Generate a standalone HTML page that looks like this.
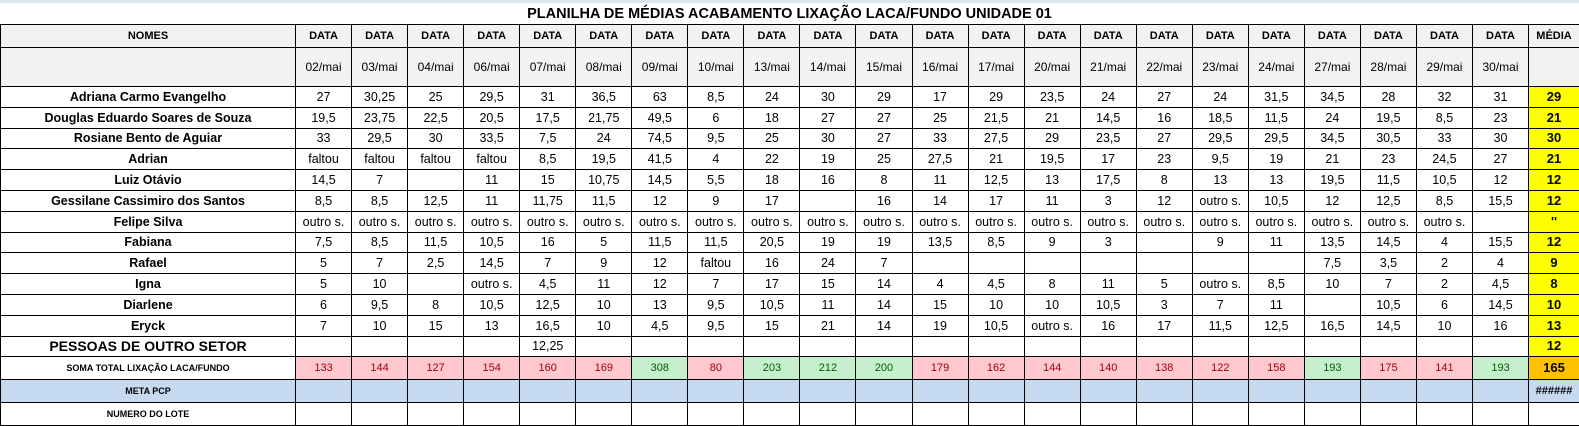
<!DOCTYPE html>
<html><head><meta charset="utf-8"><style>
body{margin:0;width:1579px;height:424px;overflow:hidden;background:#fff;font-family:"Liberation Sans",Arial,sans-serif;}
.top{height:3px;background:#dce6f1;}
.title{position:absolute;left:0;top:3px;width:1579px;height:21px;text-align:center;font-weight:bold;font-size:14.5px;line-height:22px;}
table{position:absolute;left:0;top:24px;border-collapse:collapse;table-layout:fixed;width:1579px;}
tr{height:20.8px;}
td{border:1px solid #000;padding:0;text-align:center;font-size:12.5px;line-height:16px;white-space:nowrap;overflow:hidden;}
tr.h{height:23px;}
tr.h td{background:#f2f2f2;font-weight:bold;font-size:11px;}
tr.d{height:39px;}
tr.d td{background:#f2f2f2;font-size:12px;}
td.n{font-weight:bold;font-size:12.5px;}
td.m{background:#ffff00;font-weight:bold;font-size:13px;}
tr.s,tr.p,tr.l{height:23px;}
tr.s td{font-size:11px;}
td.r{background:#ffc7ce;color:#9c0006;}
td.g{background:#c6efce;color:#006100;}
tr.p td{background:#c5d9f1;}
tr td.sm{font-weight:bold;font-size:9px;}
</style></head><body>
<div class="top"></div>
<div class="title">PLANILHA DE MÉDIAS ACABAMENTO LIXAÇÃO LACA/FUNDO UNIDADE 01</div>
<table>
<colgroup><col style="width:295px"><col span="22" style="width:56.05px"><col style="width:51px"></colgroup>
<tr class="h"><td>NOMES</td><td>DATA</td><td>DATA</td><td>DATA</td><td>DATA</td><td>DATA</td><td>DATA</td><td>DATA</td><td>DATA</td><td>DATA</td><td>DATA</td><td>DATA</td><td>DATA</td><td>DATA</td><td>DATA</td><td>DATA</td><td>DATA</td><td>DATA</td><td>DATA</td><td>DATA</td><td>DATA</td><td>DATA</td><td>DATA</td><td>MÉDIA</td></tr>
<tr class="d"><td></td><td>02/mai</td><td>03/mai</td><td>04/mai</td><td>06/mai</td><td>07/mai</td><td>08/mai</td><td>09/mai</td><td>10/mai</td><td>13/mai</td><td>14/mai</td><td>15/mai</td><td>16/mai</td><td>17/mai</td><td>20/mai</td><td>21/mai</td><td>22/mai</td><td>23/mai</td><td>24/mai</td><td>27/mai</td><td>28/mai</td><td>29/mai</td><td>30/mai</td><td></td></tr>
<tr><td class="n">Adriana Carmo Evangelho</td><td>27</td><td>30,25</td><td>25</td><td>29,5</td><td>31</td><td>36,5</td><td>63</td><td>8,5</td><td>24</td><td>30</td><td>29</td><td>17</td><td>29</td><td>23,5</td><td>24</td><td>27</td><td>24</td><td>31,5</td><td>34,5</td><td>28</td><td>32</td><td>31</td><td class="m">29</td></tr>
<tr><td class="n">Douglas Eduardo Soares de Souza</td><td>19,5</td><td>23,75</td><td>22,5</td><td>20,5</td><td>17,5</td><td>21,75</td><td>49,5</td><td>6</td><td>18</td><td>27</td><td>27</td><td>25</td><td>21,5</td><td>21</td><td>14,5</td><td>16</td><td>18,5</td><td>11,5</td><td>24</td><td>19,5</td><td>8,5</td><td>23</td><td class="m">21</td></tr>
<tr><td class="n">Rosiane Bento de Aguiar</td><td>33</td><td>29,5</td><td>30</td><td>33,5</td><td>7,5</td><td>24</td><td>74,5</td><td>9,5</td><td>25</td><td>30</td><td>27</td><td>33</td><td>27,5</td><td>29</td><td>23,5</td><td>27</td><td>29,5</td><td>29,5</td><td>34,5</td><td>30,5</td><td>33</td><td>30</td><td class="m">30</td></tr>
<tr><td class="n">Adrian</td><td>faltou</td><td>faltou</td><td>faltou</td><td>faltou</td><td>8,5</td><td>19,5</td><td>41,5</td><td>4</td><td>22</td><td>19</td><td>25</td><td>27,5</td><td>21</td><td>19,5</td><td>17</td><td>23</td><td>9,5</td><td>19</td><td>21</td><td>23</td><td>24,5</td><td>27</td><td class="m">21</td></tr>
<tr><td class="n">Luiz Otávio</td><td>14,5</td><td>7</td><td></td><td>11</td><td>15</td><td>10,75</td><td>14,5</td><td>5,5</td><td>18</td><td>16</td><td>8</td><td>11</td><td>12,5</td><td>13</td><td>17,5</td><td>8</td><td>13</td><td>13</td><td>19,5</td><td>11,5</td><td>10,5</td><td>12</td><td class="m">12</td></tr>
<tr><td class="n">Gessilane Cassimiro dos Santos</td><td>8,5</td><td>8,5</td><td>12,5</td><td>11</td><td>11,75</td><td>11,5</td><td>12</td><td>9</td><td>17</td><td></td><td>16</td><td>14</td><td>17</td><td>11</td><td>3</td><td>12</td><td>outro s.</td><td>10,5</td><td>12</td><td>12,5</td><td>8,5</td><td>15,5</td><td class="m">12</td></tr>
<tr><td class="n">Felipe Silva</td><td>outro s.</td><td>outro s.</td><td>outro s.</td><td>outro s.</td><td>outro s.</td><td>outro s.</td><td>outro s.</td><td>outro s.</td><td>outro s.</td><td>outro s.</td><td>outro s.</td><td>outro s.</td><td>outro s.</td><td>outro s.</td><td>outro s.</td><td>outro s.</td><td>outro s.</td><td>outro s.</td><td>outro s.</td><td>outro s.</td><td>outro s.</td><td></td><td class="m">''</td></tr>
<tr><td class="n">Fabiana</td><td>7,5</td><td>8,5</td><td>11,5</td><td>10,5</td><td>16</td><td>5</td><td>11,5</td><td>11,5</td><td>20,5</td><td>19</td><td>19</td><td>13,5</td><td>8,5</td><td>9</td><td>3</td><td></td><td>9</td><td>11</td><td>13,5</td><td>14,5</td><td>4</td><td>15,5</td><td class="m">12</td></tr>
<tr><td class="n">Rafael</td><td>5</td><td>7</td><td>2,5</td><td>14,5</td><td>7</td><td>9</td><td>12</td><td>faltou</td><td>16</td><td>24</td><td>7</td><td></td><td></td><td></td><td></td><td></td><td></td><td></td><td>7,5</td><td>3,5</td><td>2</td><td>4</td><td class="m">9</td></tr>
<tr><td class="n">Igna</td><td>5</td><td>10</td><td></td><td>outro s.</td><td>4,5</td><td>11</td><td>12</td><td>7</td><td>17</td><td>15</td><td>14</td><td>4</td><td>4,5</td><td>8</td><td>11</td><td>5</td><td>outro s.</td><td>8,5</td><td>10</td><td>7</td><td>2</td><td>4,5</td><td class="m">8</td></tr>
<tr><td class="n">Diarlene</td><td>6</td><td>9,5</td><td>8</td><td>10,5</td><td>12,5</td><td>10</td><td>13</td><td>9,5</td><td>10,5</td><td>11</td><td>14</td><td>15</td><td>10</td><td>10</td><td>10,5</td><td>3</td><td>7</td><td>11</td><td></td><td>10,5</td><td>6</td><td>14,5</td><td class="m">10</td></tr>
<tr><td class="n">Eryck</td><td>7</td><td>10</td><td>15</td><td>13</td><td>16,5</td><td>10</td><td>4,5</td><td>9,5</td><td>15</td><td>21</td><td>14</td><td>19</td><td>10,5</td><td>outro s.</td><td>16</td><td>17</td><td>11,5</td><td>12,5</td><td>16,5</td><td>14,5</td><td>10</td><td>16</td><td class="m">13</td></tr>
<tr><td class="n" style="font-size:14px">PESSOAS DE OUTRO SETOR</td><td></td><td></td><td></td><td></td><td>12,25</td><td></td><td></td><td></td><td></td><td></td><td></td><td></td><td></td><td></td><td></td><td></td><td></td><td></td><td></td><td></td><td></td><td></td><td class="m">12</td></tr>
<tr class="s"><td class="sm">SOMA TOTAL LIXAÇÃO LACA/FUNDO</td><td class="r">133</td><td class="r">144</td><td class="r">127</td><td class="r">154</td><td class="r">160</td><td class="r">169</td><td class="g">308</td><td class="r">80</td><td class="g">203</td><td class="g">212</td><td class="g">200</td><td class="r">179</td><td class="r">162</td><td class="r">144</td><td class="r">140</td><td class="r">138</td><td class="r">122</td><td class="r">158</td><td class="g">193</td><td class="r">175</td><td class="r">141</td><td class="g">193</td><td style="background:#ffc000;font-weight:bold;font-size:13px">165</td></tr>
<tr class="p"><td class="sm">META PCP</td><td></td><td></td><td></td><td></td><td></td><td></td><td></td><td></td><td></td><td></td><td></td><td></td><td></td><td></td><td></td><td></td><td></td><td></td><td></td><td></td><td></td><td></td><td style="font-weight:bold;font-size:11px">######</td></tr>
<tr class="l"><td class="sm">NUMERO DO LOTE</td><td></td><td></td><td></td><td></td><td></td><td></td><td></td><td></td><td></td><td></td><td></td><td></td><td></td><td></td><td></td><td></td><td></td><td></td><td></td><td></td><td></td><td></td><td></td></tr>
</table>
</body></html>
